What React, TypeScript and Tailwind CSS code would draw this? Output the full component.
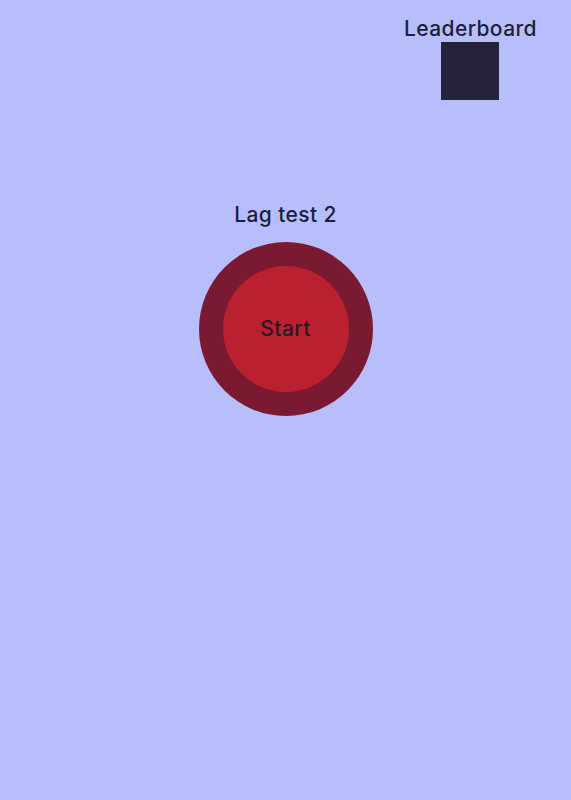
import React from "react";

export default function App() {
  return (
    <div
      className="min-h-[800px] w-full bg-[#b8befc] text-[#1f1f33]"
      style={{ fontFamily: "Inter, 'Noto Sans', sans-serif" }}
    >
      <div className="flex justify-end pr-[34px] pt-[16px]">
        <div className="flex flex-col items-center">
          <div className="text-[21px] font-medium leading-[26px] tracking-[0.4px] text-[#1c1f3a]">Leaderboard</div>
          <div className="h-[58px] w-[58px] bg-[#25233a]" />
        </div>
      </div>
      <div className="mt-[102px] flex flex-col items-center">
        <div className="text-[21px] font-medium leading-[26px] tracking-[0.4px] text-[#1c1f3a]">Lag test 2</div>
        <div className="mt-[14px] flex h-[174px] w-[174px] items-center justify-center rounded-full bg-[#7a1a32]">
          <div className="flex h-[126px] w-[126px] items-center justify-center rounded-full bg-[#bb2030]">
            <span className="text-[21px] font-medium tracking-[0.4px] text-[#2a1a20]">Start</span>
          </div>
        </div>
      </div>
    </div>
  );
}
